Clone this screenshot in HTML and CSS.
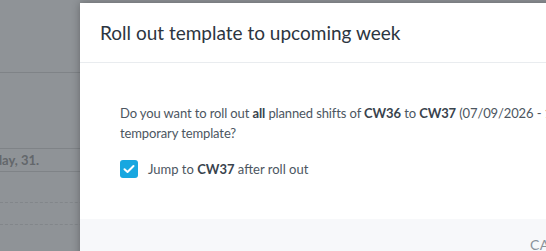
FILE: index.html
```html
<!DOCTYPE html>
<html>
<head>
<meta charset="utf-8">
<link rel="stylesheet" href="styles.css">
</head>
<body>
<div class="page">
  <div class="row row-top"></div>
  <div class="row row-mid"></div>
  <div class="row row-day"><span class="day">Sunday, 31.</span></div>
  <div class="row row-a"></div>
  <div class="row row-b"></div>
</div>
<div class="modal">
  <div class="modal-header">
    <h1 class="title">Roll out template to upcoming week</h1>
  </div>
  <div class="modal-body">
    <p class="question">Do you want to roll out <b>all</b> planned shifts of <b>CW36</b> to <b>CW37</b> (07/09/2026 - 13/09/2026) from the<br>temporary template?</p>
    <label class="check-row">
      <span class="checkbox">
        <svg width="12" height="10" viewBox="0 0 12 10"><path d="M1.5 5.2 L4.5 8 L10.5 2" fill="none" stroke="#fff" stroke-width="2" stroke-linecap="round" stroke-linejoin="round"/></svg>
      </span>
      <span class="check-label">Jump to <b>CW37</b> after roll out</span>
    </label>
  </div>
  <div class="modal-footer">
    <span class="btn">CANCEL</span>
  </div>
</div>
</body>
</html>
```
FILE: styles.css
```css
* { box-sizing: border-box; }
html, body { margin: 0; padding: 0; }
body {
  width: 546px;
  height: 251px;
  overflow: hidden;
  background: #8f9397;
  font-family: Lato, "Open Sans", sans-serif;
  position: relative;
}
.page { width: 546px; }
.row { border-bottom: 1px solid #7f8387; }
.row-top { height: 73px; }
.row-mid { height: 76px; }
.row-day { height: 23px; display: flex; align-items: center; }
.row-a { height: 31px; border-bottom: 1px dashed #82868a; }
.row-b { height: 22px; border-bottom: 1px dashed #82868a; }
.day {
  margin-left: -27px;
  font-size: 13px;
  font-weight: bold;
  color: #63676b;
  white-space: nowrap;
}
.modal {
  position: absolute;
  left: 80px;
  top: 3px;
  width: 720px;
  height: 300px;
  background: #fff;
  box-shadow: 0 0 8px rgba(0,0,0,0.3);
}
.modal-header {
  height: 60px;
  border-bottom: 1px solid #e9ecef;
  padding: 0 20px;
  display: flex;
  align-items: center;
}
.title {
  margin: 0;
  font-size: 19px;
  font-weight: normal;
  color: #2c3540;
}
.modal-body {
  height: 156px;
  padding: 40px 40px 0;
  color: #4c5661;
  font-size: 13px;
}
.question { margin: 0; line-height: 20px; white-space: nowrap; letter-spacing: -0.12px; }
.question b, .check-label b { color: #39434d; }
.check-row {
  display: flex;
  align-items: center;
  margin-top: 16px;
}
.checkbox {
  width: 18px;
  height: 18px;
  border-radius: 3px;
  background: #18a7e0;
  display: flex;
  align-items: center;
  justify-content: center;
  margin-right: 10px;
}
.check-label { line-height: 20px; }
.modal-footer {
  height: 80px;
  background: #f7f8fa;
  padding: 15px 20px 0 450px;
}
.btn {
  display: inline-block;
  font-size: 14px;
  color: #8a929a;
  letter-spacing: 0.5px;
  padding-top: 2px;
}
```
